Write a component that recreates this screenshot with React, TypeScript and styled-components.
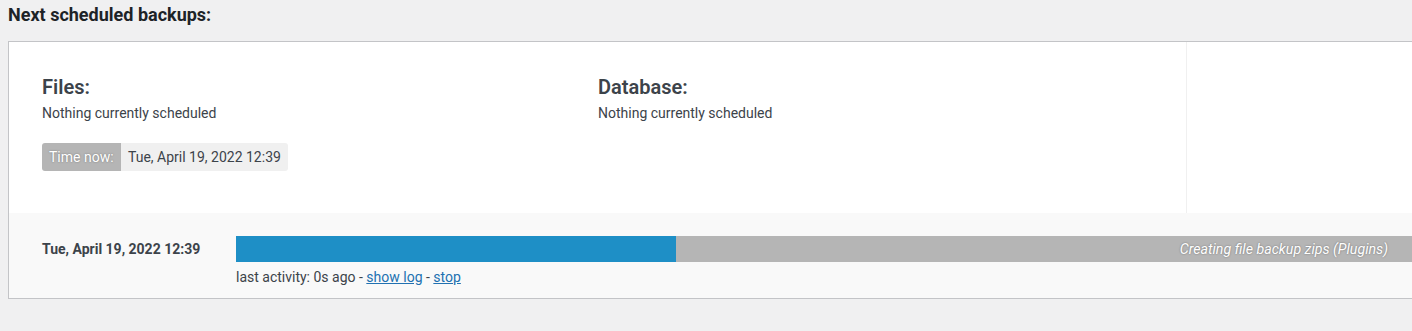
import React from 'react';
import styled, { createGlobalStyle } from 'styled-components';

const GlobalStyle = createGlobalStyle`
    body {
        margin: 0;
        background: #f0f0f1;
        font-family: Roboto, 'Liberation Sans', sans-serif;
        color: #3c434a;
        overflow: hidden;
    }
`;

const Page = styled.div`
    padding: 0 0 0 8px;
    width: 1440px;
`;

const Title = styled.h3`
    margin: 0;
    padding-top: 3px;
    height: 38px;
    font-size: 18px;
    font-weight: 700;
    color: #1d2327;
    line-height: 24px;
`;

const Box = styled.div`
    border: 1px solid #c3c4c7;
    background: #fff;
`;

const Top = styled.div`
    display: flex;
    height: 171px;
`;

const Schedule = styled.div`
    flex: 0 0 1178px;
    display: flex;
    flex-direction: column;
    padding: 33px 0 0 33px;
    box-sizing: border-box;
    border-right: 1px solid #f0f0f0;
`;

const Columns = styled.div`
    display: flex;
`;

const Column = styled.div`
    width: 556px;
`;

const Heading = styled.h4`
    margin: 0;
    font-size: 20px;
    font-weight: 600;
    line-height: 24px;
    color: #3c434a;
`;

const Note = styled.div`
    font-size: 14px;
    line-height: 20px;
    margin-top: 4px;
`;

const TimeNow = styled.div`
    display: inline-flex;
    margin-top: 20px;
    height: 28px;
    border-radius: 3px;
    overflow: hidden;
    font-size: 14px;
    align-self: flex-start;
`;

const TimeLabel = styled.span`
    background: #b5b5b5;
    color: #fff;
    text-shadow: 0 0 2px rgba(0, 0, 0, 0.35);
    padding: 0 7px;
    width: 79px;
    box-sizing: border-box;
    display: flex;
    align-items: center;
`;

const TimeValue = styled.span`
    background: #f0f0f0;
    padding: 0 7px;
    width: 167px;
    box-sizing: border-box;
    display: flex;
    align-items: center;
`;

const Running = styled.div`
    background: #f9f9f9;
    display: flex;
    height: 85px;
    padding: 23px 0 0 33px;
    box-sizing: border-box;
`;

const RunDate = styled.div`
    width: 194px;
    flex-shrink: 0;
    font-size: 14px;
    font-weight: 700;
    color: #3c434a;
    line-height: 26px;
`;

const RunInfo = styled.div`
    flex: 1;
`;

const Bar = styled.div`
    position: relative;
    height: 26px;
    width: 1176px;
    background: #b5b5b5;
    display: flex;
`;

const Fill = styled.div`
    background: #1e8fc6;
    height: 100%;
`;

const BarText = styled.span`
    position: absolute;
    right: 24px;
    top: 0;
    line-height: 26px;
    font-size: 14.2px;
    font-style: italic;
    color: #fff;
    text-shadow: 0 0 2px rgba(0, 0, 0, 0.4);
`;

const Activity = styled.div`
    font-size: 14px;
    line-height: 20px;
    margin-top: 5px;
    a {
        color: #2271b1;
        text-decoration: underline;
    }
`;

const App = () => {
    const progress = 440;
    return (
        <>
            <GlobalStyle />
            <Page>
                <Title>Next scheduled backups:</Title>
                <Box>
                    <Top>
                        <Schedule>
                            <Columns>
                                <Column>
                                    <Heading>Files:</Heading>
                                    <Note>Nothing currently scheduled</Note>
                                </Column>
                                <Column>
                                    <Heading>Database:</Heading>
                                    <Note>Nothing currently scheduled</Note>
                                </Column>
                            </Columns>
                            <TimeNow>
                                <TimeLabel>Time now:</TimeLabel>
                                <TimeValue>Tue, April 19, 2022 12:39</TimeValue>
                            </TimeNow>
                        </Schedule>
                    </Top>
                    <Running>
                        <RunDate>Tue, April 19, 2022 12:39</RunDate>
                        <RunInfo>
                            <Bar>
                                <Fill style={{ width: progress }} />
                                <BarText>Creating file backup zips (Plugins)</BarText>
                            </Bar>
                            <Activity>
                                last activity: 0s ago - <a href="#">show log</a> - <a href="#">stop</a>
                            </Activity>
                        </RunInfo>
                    </Running>
                </Box>
            </Page>
        </>
    );
};

export default App;
